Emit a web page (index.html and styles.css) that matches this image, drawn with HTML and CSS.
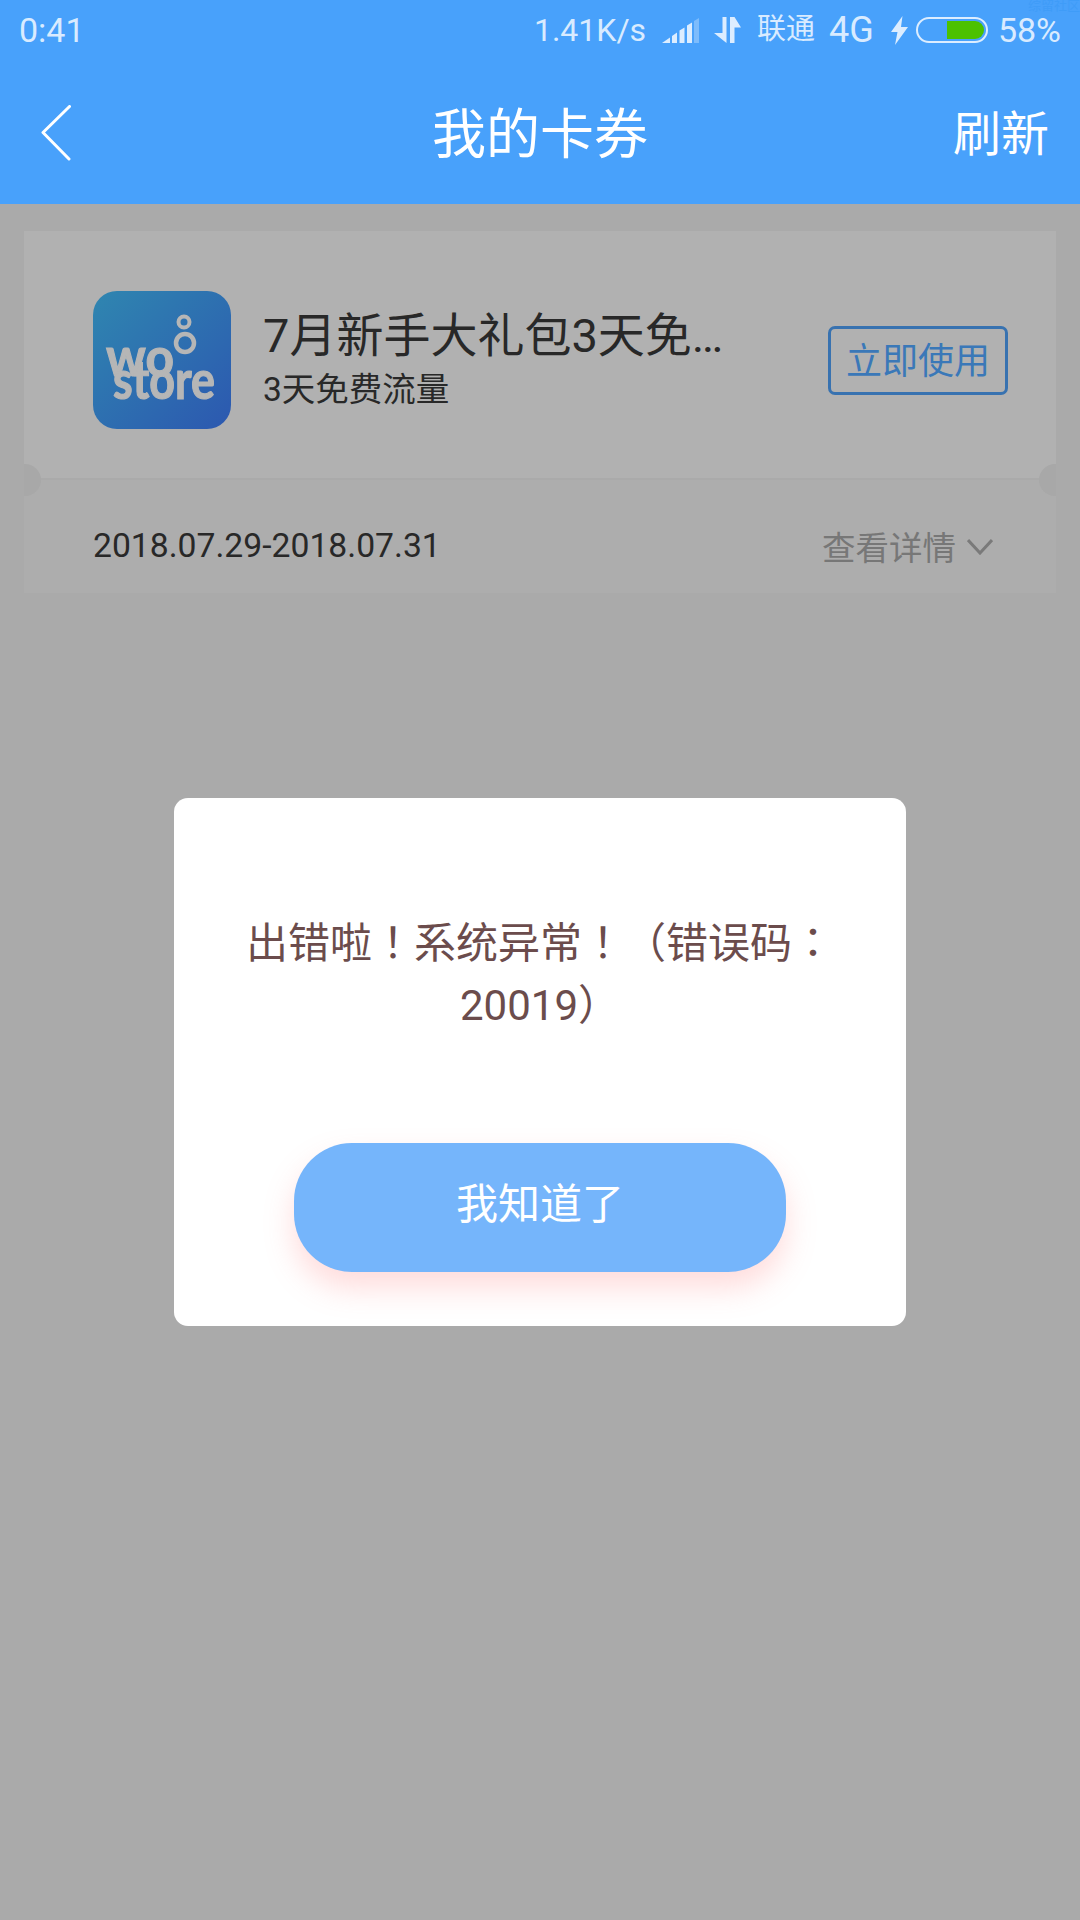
FILE: index.html
```html
<!DOCTYPE html>
<html>
	<head>
		<meta charset="utf-8">
		<title>我的卡券</title>
		<link rel="stylesheet" href="styles.css">
	</head>
	<body>
		<div class="header">
			<div class="status">
				<span class="time">0:41</span>
				<span class="speed">1.41K/s</span>
				<svg class="signal" width="37" height="25" viewBox="0 0 37 25">
					<polygon points="0,25 8,19.5 8,25" fill="#dcedff"/>
					<polygon points="10,25 10,18 15,14.5 15,25" fill="#dcedff"/>
					<polygon points="17.5,25 17.5,12.5 22.5,9.5 22.5,25" fill="#dcedff"/>
					<polygon points="25,25 25,7.5 30,4.5 30,25" fill="#dcedff"/>
					<polygon points="32,25 32,3 37,0 37,25" fill="#7dbcfc"/>
				</svg>
				<svg class="arrows" width="27" height="27" viewBox="0 0 27 27">
					<polygon points="8.5,0 12.5,0 12.5,26 0,16 8.5,16" fill="#dcedff"/>
					<polygon points="16,0 20.5,0 27,10.5 20.5,10.5 20.5,26 16,26" fill="#dcedff"/>
				</svg>
				<span class="carrier">联通</span>
				<span class="net">4G</span>
				<svg class="bolt" width="17" height="29" viewBox="0 0 17 29">
					<polygon points="11.5,0 0,16 6.5,16 4,29 17,11 10,11" fill="#dcedff"/>
				</svg>
				<div class="battery"><div class="battery-fill"></div></div>
				<span class="percent">58%</span>
				<span class="mark">综留社区</span>
			</div>
			<div class="nav">
				<svg class="back" width="30" height="56" viewBox="0 0 30 56">
					<polyline points="28.5,1.5 2,27.5 28,54" fill="none" stroke="#fff" stroke-width="3" stroke-linecap="round" stroke-linejoin="round"/>
				</svg>
				<span class="title">我的卡券</span>
				<span class="refresh">刷新</span>
			</div>
		</div>
		<div class="content">
			<div class="card">
				<div class="card-top">
					<svg class="logo" width="138" height="138" viewBox="0 0 138 138">
						<defs>
							<linearGradient id="logoBg" x1="0" y1="0" x2="1" y2="1">
								<stop offset="0" stop-color="#2f86b0"/>
								<stop offset="1" stop-color="#2c58b0"/>
							</linearGradient>
						</defs>
						<rect width="138" height="138" rx="24" fill="url(#logoBg)"/>
						<circle cx="91" cy="31" r="5.5" fill="none" stroke="#b6b6b6" stroke-width="4"/>
						<circle cx="92" cy="52" r="9" fill="none" stroke="#b6b6b6" stroke-width="4.5"/>
						<text class="logo-text" x="13" y="85" font-size="54" textLength="68" lengthAdjust="spacingAndGlyphs">wo</text>
						<text class="logo-text" x="20" y="108" font-size="54" textLength="102" lengthAdjust="spacingAndGlyphs">store</text>
					</svg>
					<div class="card-info">
						<div class="card-title">7月新手大礼包3天免…</div>
						<div class="card-sub">3天免费流量</div>
					</div>
					<div class="use-btn">立即使用</div>
				</div>
				<div class="card-bottom">
					<span class="date">2018.07.29-2018.07.31</span>
					<span class="detail">查看详情</span>
					<svg class="chevron" width="26" height="16" viewBox="0 0 26 16">
						<polyline points="1,1 13,14 25,1" fill="none" stroke="#7a7a7a" stroke-width="3"/>
					</svg>
				</div>
				<div class="notch notch-left"></div>
				<div class="notch notch-right"></div>
			</div>
			<div class="overlay">
				<div class="dialog">
					<div class="message">出错啦！系统异常！（错误码：20019）</div>
					<div class="ok-btn">我知道了</div>
				</div>
			</div>
		</div>
	</body>
</html>
```

FILE: styles.css
```css
html {
	height: 100%;
}
body {
	margin: 0;
	width: 1080px;
	height: 1920px;
	display: flex;
	flex-flow: column;
	overflow: hidden;
	font-family: Roboto, "Noto Sans CJK SC", sans-serif;
	background-color: #aaaaaa;
}
.header {
	height: 204px;
	flex: none;
	background-color: #48a1fb;
	color: #fff;
}
.status {
	height: 60px;
	padding: 0 19px;
	display: flex;
	align-items: center;
	position: relative;
	color: #d9ebff;
	font-size: 34px;
}
.time {
	margin-right: auto;
}
.speed {
	font-size: 32px;
}
.signal {
	margin-left: 16px;
	margin-top: 1px;
}
.arrows {
	margin-left: 15px;
}
.carrier {
	margin-left: 16px;
	font-size: 29px;
	line-height: 36px;
	padding-bottom: 2px;
}
.net {
	margin-left: 14px;
	font-size: 36px;
}
.bolt {
	margin-left: 17px;
}
.battery {
	width: 72px;
	height: 26px;
	margin-left: 8px;
	box-sizing: border-box;
	border: 2px solid #dcedff;
	border-radius: 13px;
	padding: 2px;
	display: flex;
	justify-content: flex-end;
}
.battery-fill {
	width: 37px;
	background-color: #4cc100;
	border-radius: 0 9px 9px 0;
}
.percent {
	margin-left: 10px;
}
.mark {
	position: absolute;
	right: 0;
	top: -1px;
	font-size: 13px;
	line-height: 14px;
	color: #3f9cf8;
}
.nav {
	height: 144px;
	padding: 0 31px 0 41px;
	display: flex;
	align-items: center;
	justify-content: space-between;
	position: relative;
}
.back {
	margin-top: 1px;
}
.title {
	position: absolute;
	left: 0;
	right: 0;
	text-align: center;
	font-size: 54px;
	line-height: 60px;
	padding-top: 8px;
}
.refresh {
	font-size: 48px;
	line-height: 60px;
	padding-top: 6px;
}
.content {
	flex: 1;
	position: relative;
	padding: 27px 24px 0;
	background-color: #aaaaaa;
}
.card {
	position: relative;
	color: #282828;
}
.card-top {
	height: 249px;
	box-sizing: border-box;
	padding: 10px 48px 0 69px;
	display: flex;
	align-items: center;
	background-color: #b1b1b1;
	border-bottom: 2px solid #aaaaaa;
}
.logo {
	flex: none;
}
.logo-text {
	font-family: Lato, sans-serif;
	font-weight: bold;
	fill: #b6b6b6;
	stroke: #b6b6b6;
	stroke-width: 1.2px;
}
.card-info {
	margin-left: 32px;
	flex: 1;
	min-width: 0;
}
.card-title {
	font-size: 47px;
	line-height: 54px;
	white-space: nowrap;
}
.card-sub {
	font-size: 33.5px;
	line-height: 40px;
	margin-top: 7px;
}
.use-btn {
	width: 180px;
	height: 69px;
	flex: none;
	box-sizing: border-box;
	margin-top: 2px;
	padding-bottom: 5px;
	border: 3px solid #3872b0;
	border-radius: 7px;
	display: flex;
	align-items: center;
	justify-content: center;
	color: #3a78b8;
	font-size: 36px;
}
.card-bottom {
	height: 113px;
	box-sizing: border-box;
	padding: 18px 63px 0 69px;
	display: flex;
	align-items: center;
	background-color: #adadad;
	font-size: 33.7px;
}
.date {
	margin-right: auto;
}
.detail {
	color: #777777;
	font-size: 33.5px;
}
.chevron {
	margin-left: 11px;
	margin-top: 2px;
}
.notch {
	position: absolute;
	top: 233px;
	width: 17px;
	height: 32px;
	background-color: #a8a8a8;
}
.notch-left {
	left: 0;
	border-radius: 0 16px 16px 0;
}
.notch-right {
	right: 0;
	border-radius: 16px 0 0 16px;
}
.overlay {
	position: absolute;
	top: 0;
	left: 0;
	right: 0;
	bottom: 0;
	display: flex;
	align-items: center;
	justify-content: center;
}
.dialog {
	width: 732px;
	height: 528px;
	box-sizing: border-box;
	padding: 115px 60px 0;
	background-color: #fff;
	border-radius: 14px;
}
.message {
	height: 124px;
	text-align: center;
	font-family: Roboto, "Noto Sans CJK JP", sans-serif;
	font-size: 42px;
	line-height: 62px;
	color: #6b4c4c;
}
.ok-btn {
	height: 129px;
	box-sizing: border-box;
	margin: 106px 60px 0;
	padding-bottom: 14px;
	border-radius: 58px;
	background-color: #75b5fb;
	box-shadow: 0 16px 30px rgba(255, 140, 140, 0.3);
	display: flex;
	align-items: center;
	justify-content: center;
	color: #fff;
	font-size: 42px;
}
```
